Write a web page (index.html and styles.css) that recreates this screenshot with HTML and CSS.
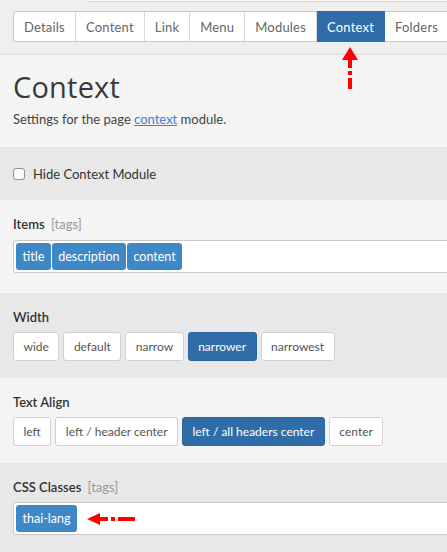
FILE: index.html
```html
<!DOCTYPE html>
<html lang="en">
<head>
<meta charset="utf-8">
<title>Context settings</title>
<link rel="stylesheet" href="styles.css">
</head>
<body>
<div class="page">
  <div class="topbar">
    <div class="topedge"></div>
    <nav class="tabs">
      <a class="tab">Details</a>
      <a class="tab">Content</a>
      <a class="tab">Link</a>
      <a class="tab">Menu</a>
      <a class="tab">Modules</a>
      <a class="tab active">Context</a>
      <a class="tab">Folders</a>
    </nav>
    <svg class="marker marker-up" width="20" height="44" viewBox="0 0 20 44">
      <polygon points="10,0 2,13 18,13" fill="#f00"/>
      <rect x="8" y="12" width="4" height="9" fill="#f00"/>
      <rect x="8" y="24" width="4" height="4" fill="#f00"/>
      <rect x="8" y="31" width="4" height="11" fill="#f00"/>
    </svg>
  </div>

  <header class="intro">
    <h1>Context</h1>
    <p>Settings for the page <a href="#">context</a> module.</p>
  </header>

  <section class="field dark check-row">
    <label class="check"><span class="box"></span>Hide Context Module</label>
  </section>

  <section class="field light tags-row">
    <div class="label">Items <span class="hint">[tags]</span></div>
    <div class="taginput">
      <span class="tag">title</span><span class="tag">description</span><span class="tag">content</span>
    </div>
  </section>

  <section class="field dark">
    <div class="label">Width</div>
    <div class="btns">
      <span class="btn">wide</span>
      <span class="btn">default</span>
      <span class="btn">narrow</span>
      <span class="btn active">narrower</span>
      <span class="btn">narrowest</span>
    </div>
  </section>

  <section class="field light">
    <div class="label">Text Align</div>
    <div class="btns">
      <span class="btn">left</span>
      <span class="btn">left / header center</span>
      <span class="btn active">left / all headers center</span>
      <span class="btn">center</span>
    </div>
  </section>

  <section class="field dark last">
    <div class="label">CSS Classes <span class="hint">[tags]</span></div>
    <div class="taginput with-marker">
      <span class="tag">thai-lang</span>
      <svg class="marker marker-left" width="50" height="14" viewBox="0 0 50 14">
        <polygon points="0,7 13,1 13,13" fill="#f00"/>
        <rect x="12" y="5" width="9" height="4" fill="#f00"/>
        <rect x="24" y="5" width="4" height="4" fill="#f00"/>
        <rect x="31" y="5" width="17" height="4" fill="#f00"/>
      </svg>
    </div>
  </section>
</div>
</body>
</html>
```
FILE: styles.css
```css
* { box-sizing: border-box; }

html, body {
  margin: 0;
  padding: 0;
}

body {
  width: 447px;
  height: 552px;
  overflow: hidden;
  font-family: "Lato", "Open Sans", sans-serif;
  font-size: 13px;
  color: #333;
  background: #f4f4f4;
}

.page {
  width: 447px;
  overflow: hidden;
}

/* header strip with the tab bar */
.topbar {
  position: relative;
  background: #efefef;
  border-bottom: 1px solid #dcdcdc;
  height: 55px;
}

.topedge {
  margin-left: 88px;
  height: 2px;
  background: #fafafa;
  border-bottom: 1px solid #d6d6d6;
}

.tabs {
  display: flex;
  margin: 9px 0 0 13px;
  height: 31px;
  width: 460px;
  background: #fff;
  border: 1px solid #c8c8c8;
  border-radius: 3px;
}

.tab {
  display: flex;
  align-items: center;
  padding: 0 10px;
  color: #666;
  font-size: 13px;
  letter-spacing: 0.2px;
  border-right: 1px solid #d8d8d8;
  text-decoration: none;
}

.tab.active {
  background: #2e6da7;
  color: #fff;
  border-right-color: #2e6da7;
  margin: -1px 0;
  height: 31px;
}

.marker {
  position: absolute;
  display: block;
}

.marker-up {
  left: 340px;
  top: 47px;
}

/* page title */
.intro {
  padding: 12px 13px 20px;
}

.intro h1 {
  margin: 0;
  font-family: "Open Sans", sans-serif;
  font-weight: 400;
  font-size: 29px;
  line-height: 40px;
  color: #3a3a3a;
  letter-spacing: 0.2px;
}

.intro p {
  margin: 4px 0 0;
  font-size: 13px;
  color: #444;
}

.intro a {
  color: #3c85c8;
  text-decoration: underline;
}

/* form rows */
.field {
  padding: 15px 13px 17px;
}

.field.dark { background: #e8e8e8; }
.field.light { background: #f4f4f4; }

.check-row {
  padding: 20px 13px 19px;
}

.tags-row {
  padding-bottom: 20px;
}

.check {
  display: flex;
  align-items: center;
  gap: 8px;
  font-size: 13px;
  color: #333;
  line-height: 14px;
}

.box {
  width: 12px;
  height: 12px;
  border: 1px solid #8f8f8f;
  border-radius: 3px;
  background: #fbfbfb;
}

.label {
  font-size: 13px;
  line-height: 18px;
  font-weight: 600;
  color: #333;
  margin-bottom: 6px;
}

.hint {
  font-weight: 400;
  color: #999;
  margin-left: 3px;
}

.taginput {
  display: flex;
  align-items: center;
  gap: 1px;
  height: 33px;
  width: 460px;
  padding: 2px;
  background: #fff;
  border: 1px solid #c8c8c8;
  border-radius: 3px;
}

.light .label + .taginput { margin-top: 7px; }

.tag {
  display: flex;
  align-items: center;
  height: 27px;
  padding: 0 6.5px;
  background: #3f88c8;
  color: #fff;
  border-radius: 3px;
  font-size: 12.5px;
}

.with-marker .marker-left {
  position: relative;
  margin-left: 9px;
}

.btns {
  display: flex;
  gap: 4px;
}

.btn {
  display: flex;
  align-items: center;
  height: 29px;
  padding: 0 9.5px;
  background: #fff;
  border: 1px solid #d0d0d0;
  border-radius: 3px;
  color: #555;
  font-size: 12px;
}

.btn.active {
  background: #2e6da7;
  border-color: #2a659b;
  color: #fff;
}

.last { padding-bottom: 40px; }
```
